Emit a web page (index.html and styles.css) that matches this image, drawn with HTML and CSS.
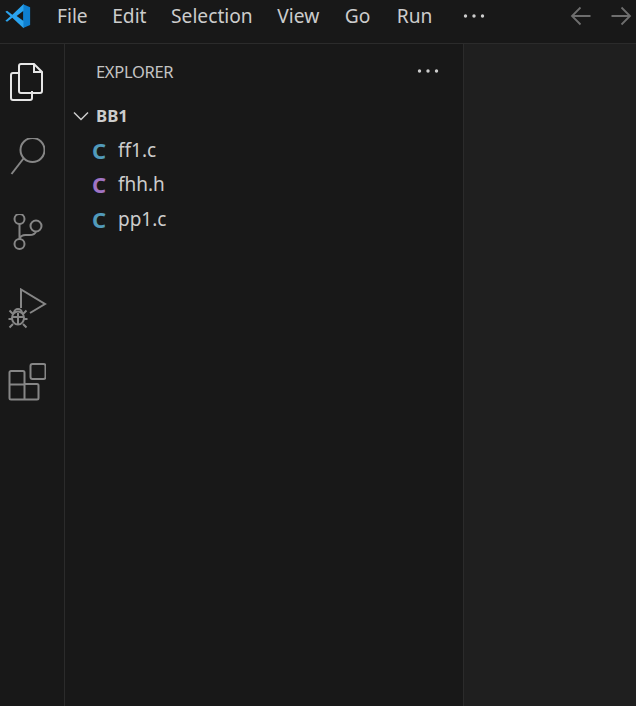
FILE: index.html
```html
<!DOCTYPE html>
<html lang="en">
<head>
<meta charset="utf-8">
<title>Explorer</title>
<link rel="stylesheet" href="styles.css">
</head>
<body>
<div class="window">
  <header class="titlebar">
    <svg class="logo" width="30" height="30" viewBox="0 0 32 32"><path fill="#0e7fd0" d="M22.500 3.400 30 6.600v19l-7.500 3.200z"/><path fill="#2aa3ee" d="M23 3.200 11 14.600 5.400 10.300 3.600 11.500 9 16.200 3.600 21l1.800 1.100 5.600-4.300 12 11.200v-7.600L15.600 16 23 10.500z"/></svg>
    <nav class="menu">
      <span>File</span>
      <span>Edit</span>
      <span>Selection</span>
      <span>View</span>
      <span class="m-go">Go</span>
      <span class="m-run">Run</span>
    </nav>
    <svg class="dots dots-menu" width="22" height="6" viewBox="0 0 22 6"><circle cx="2.500" cy="3" r="1.700"/><circle cx="11" cy="3" r="1.700"/><circle cx="19.500" cy="3" r="1.700"/></svg>
    <div class="arrows">
      <svg width="22" height="20" viewBox="0 0 22 20"><path d="M20.500 10H2M10.500 1.500 2 10l8.500 8.500"/></svg>
      <svg width="22" height="20" viewBox="0 0 22 20"><path d="M1.500 10H20M11.500 1.500 20 10l-8.500 8.500"/></svg>
    </div>
  </header>
  <main class="body">
    <aside class="activity">
      <svg class="act act-files" width="36" height="40" viewBox="0 0 36 40"><path d="M12 2h13l8 8v19a2 2 0 0 1-2 2H12a2 2 0 0 1-2-2V4a2 2 0 0 1 2-2zM25 2v8h8"/><path d="M10 11H4a2 2 0 0 0-2 2v23a2 2 0 0 0 2 2h17a2 2 0 0 0 2-2v-7"/></svg>
      <svg class="act act-search" width="36" height="40" viewBox="0 0 36 40"><circle cx="23.500" cy="12" r="12"/><path d="M14.500 20.500 2.500 36"/></svg>
      <svg class="act act-git" width="30" height="40" viewBox="0 0 30 40"><circle cx="6.500" cy="5" r="5"/><circle cx="6.500" cy="30" r="5"/><circle cx="23" cy="12" r="5.500"/><path d="M6.500 10v15M6.500 25c1-3 3-4 6-4h4c4 0 6-2 6.500-3.500"/></svg>
      <svg class="act act-debug" width="40" height="42" viewBox="0 0 40 42"><path d="M13 20V1.500L37 16 22 25"/><ellipse cx="10" cy="30" rx="6" ry="6.500"/><path d="M6 25a4 4 0 0 1 8 0M10 25v11M4 29h12M0.500 31h3.500M16 31h3.500M1.500 22.500l3.500 3.500M18.500 22.500 15 26M1.500 39.500 5 36M18.500 39.500 15 36"/></svg>
      <svg class="act act-ext" width="38" height="38" viewBox="0 0 38 38"><rect x="22.500" y="1" width="15" height="15" rx="2"/><path d="M3 8h12a1.500 1.500 0 0 1 1.500 1.500V21H29a1.500 1.500 0 0 1 1.500 1.500V35a1.500 1.500 0 0 1-1.500 1.500H3A1.500 1.500 0 0 1 1.500 35V9.500A1.500 1.500 0 0 1 3 8zM1.500 21.500h15v15"/></svg>
    </aside>
    <section class="sidebar">
      <div class="side-head">
        <span class="side-title">EXPLORER</span>
        <svg class="dots" width="22" height="6" viewBox="0 0 22 6"><circle cx="2.500" cy="3" r="1.700"/><circle cx="11" cy="3" r="1.700"/><circle cx="19.500" cy="3" r="1.700"/></svg>
      </div>
      <div class="tree">
        <div class="folder">
          <svg width="16" height="10" viewBox="0 0 16 10"><path d="M1 1.500 8 8.500l7-7"/></svg>
          <span>BB1</span>
        </div>
        <div class="file"><span class="ficon c">C</span><span>ff1.c</span></div>
        <div class="file"><span class="ficon h">C</span><span>fhh.h</span></div>
        <div class="file"><span class="ficon c">C</span><span>pp1.c</span></div>
      </div>
    </section>
    <section class="editor"></section>
  </main>
</div>
</body>
</html>
```
FILE: styles.css
```css
* { box-sizing: border-box; }
html, body { margin: 0; height: 100%; overflow: hidden; background: #181818; }
body { font-family: "Noto Sans", "Open Sans", sans-serif; color: #cccccc; }
.window { width: 636px; height: 706px; display: flex; flex-direction: column; }
.titlebar { height: 44px; flex: none; display: flex; align-items: center; padding-left: 2px; border-bottom: 1px solid #2b2b2b; background: #181818; }
.logo { flex: none; margin-top: -12px; }
.menu { display: flex; gap: 24.500px; margin-left: 25px; font-size: 19.200px; color: #cccccc; margin-top: -12px; line-height: 28px; }
.m-go { margin-left: 1px; }
.m-run { margin-left: 2px; }
.dots { fill: #cccccc; flex: none; }
.dots-menu { margin-left: 31px; margin-top: -12px; }
.arrows { display: flex; gap: 18px; margin-left: auto; margin-right: 4px; margin-top: -12px; }
.arrows svg { fill: none; stroke: #6e6e6e; stroke-width: 1.800; flex: none; }
.body { flex: 1; display: flex; min-height: 0; }
.activity { width: 65px; flex: none; border-right: 1px solid #2b2b2b; display: flex; flex-direction: column; align-items: center; padding-top: 18px; padding-right: 11px; }
.act { fill: none; stroke: #868686; stroke-width: 2; flex: none; }
.act-files { stroke: #e6e6e6; margin-bottom: 36px; }
.act-search { margin-bottom: 36px; }
.act-git { margin-bottom: 34px; margin-left: 2px; }
.act-debug { margin-bottom: 33px; margin-left: 3px; }
.sidebar { width: 399px; flex: none; border-right: 1px solid #2b2b2b; padding-top: 13px; }
.side-head { display: flex; align-items: center; justify-content: space-between; padding: 0 24px 0 31px; height: 28px; }
.side-title { font-size: 16.500px; color: #c4c4c4; letter-spacing: -0.300px; }
.tree { margin-top: 14px; }
.folder { display: flex; align-items: center; gap: 7px; height: 33.500px; padding-left: 8px; font-size: 16.800px; font-weight: 700; color: #cccccc; }
.folder svg { fill: none; stroke: #cccccc; stroke-width: 1.500; flex: none; }
.file { display: flex; align-items: center; height: 34.500px; padding-left: 27px; font-size: 19px; color: #cccccc; }
.ficon { width: 26px; flex: none; font-weight: 700; font-size: 22px; }
.ficon.c { color: #519aba; }
.ficon.h { color: #a074c4; }
.editor { flex: 1; background: #1f1f1f; }
```
